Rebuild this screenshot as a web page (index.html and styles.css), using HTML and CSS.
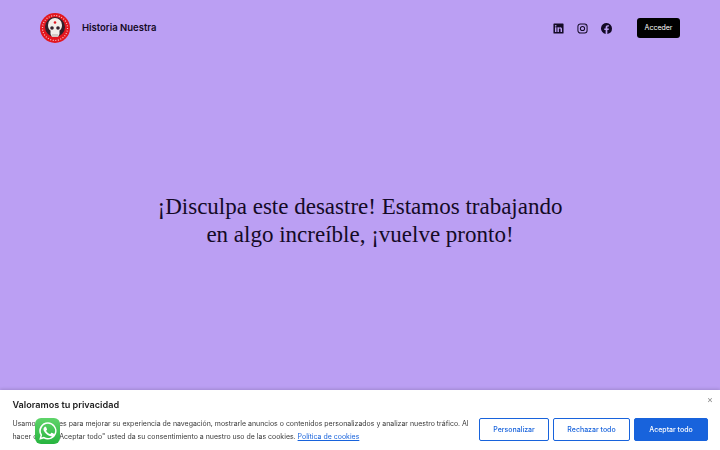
FILE: index.html
```html
<!DOCTYPE html>
<html lang="es">
<head>
	<meta charset="UTF-8">
	<title>Historia Nuestra</title>
	<link rel="stylesheet" href="styles.css">
</head>
<body>
	<div class="page">
		<header class="top">
			<a class="brand" href="#">
				<svg class="logo" width="30" height="30" viewBox="0 0 30 30">
					<circle cx="15" cy="15" r="15" fill="#e3161f"/>
					<circle cx="15" cy="15" r="12.500" fill="none" stroke="#f6c6c6" stroke-width="1.200" stroke-dasharray="1 1.600"/>
					<circle cx="15" cy="14" r="10" fill="#33202a"/>
					<path d="M8 12a7 7 0 0 1 14 0c0 3-1 4.500-2.500 5.500v3.500l-1.500 3h-6l-1.500-3v-3.500c-1.500-1-2.500-2.500-2.500-5.500z" fill="#f3eee8"/>
					<circle cx="12" cy="15" r="1.800" fill="#33202a"/>
					<circle cx="18" cy="15" r="1.800" fill="#33202a"/>
					<circle cx="15" cy="9.500" r="1.300" fill="#e3161f"/>
					<path d="M13 21v3M15 21v3M17 21v3" stroke="#8a7a75" stroke-width=".6"/>
				</svg>
				<span class="brand-name">Historia Nuestra</span>
			</a>
			<nav class="nav">
				<a class="social" href="#">
					<svg width="11" height="11" viewBox="0 0 24 24"><path fill="#140a26" d="M21.700 1H2.300C1.600 1 1 1.600 1 2.300v19.400c0 .7.600 1.300 1.300 1.300h19.400c.7 0 1.300-.6 1.300-1.300V2.300c0-.7-.6-1.300-1.300-1.300zM7.500 19.700H4.300V9.400h3.200v10.300zM5.900 8c-1 0-1.900-.8-1.900-1.900s.9-1.900 1.900-1.900 1.900.9 1.900 1.900S7 8 5.900 8zm13.800 11.700h-3.200v-5c0-1.200 0-2.700-1.700-2.700s-1.900 1.300-1.900 2.600v5.100H9.700V9.400h3.100v1.400c.4-.8 1.500-1.700 3.100-1.700 3.300 0 3.800 2.100 3.800 4.900v5.700z"/></svg>
				</a>
				<a class="social" href="#">
					<svg width="11" height="11" viewBox="0 0 24 24" fill="none" stroke="#140a26" stroke-width="2.200"><rect x="2" y="2" width="20" height="20" rx="5.500"/><circle cx="12" cy="12" r="4.600"/><circle cx="17.800" cy="6.200" r="1" fill="#140a26" stroke="none"/></svg>
				</a>
				<a class="social" href="#">
					<svg width="11" height="11" viewBox="0 0 24 24"><path fill="#140a26" d="M24 12a12 12 0 1 0-13.900 11.900v-8.400H7.100V12h3V9.400c0-3 1.800-4.700 4.500-4.700 1.300 0 2.700.2 2.700.2v3h-1.500c-1.500 0-2 .9-2 1.900V12h3.400l-.5 3.500h-2.800v8.400A12 12 0 0 0 24 12z"/></svg>
				</a>
				<a class="login" href="#">Acceder</a>
			</nav>
		</header>
		<main class="hero">
			<h1 class="headline">¡Disculpa este desastre! Estamos trabajando<br>en algo increíble, ¡vuelve pronto!</h1>
		</main>
	</div>

	<!-- aviso de cookies -->
	<div class="cookie">
		<button class="cookie-close" type="button">×</button>
		<h2 class="cookie-title">Valoramos tu privacidad</h2>
		<div class="cookie-row">
			<p class="cookie-text">Usamos cookies para mejorar su experiencia de navegación, mostrarle anuncios o contenidos personalizados y analizar nuestro tráfico. Al hacer clic en "Aceptar todo" usted da su consentimiento a nuestro uso de las cookies. <a href="#">Política de cookies</a></p>
			<div class="cookie-btns">
				<button class="btn btn-line btn-custom" type="button">Personalizar</button>
				<button class="btn btn-line" type="button">Rechazar todo</button>
				<button class="btn btn-fill" type="button">Aceptar todo</button>
			</div>
		</div>
	</div>

	<a class="whatsapp" href="#">
		<svg width="20" height="20" viewBox="0 0 24 24"><path fill="#fff" d="M12 1.500A10.400 10.400 0 0 0 3 17.200L1.500 22.500l5.500-1.400A10.400 10.400 0 1 0 12 1.500zm0 1.900a8.500 8.500 0 1 1-4.500 15.700l-.4-.2-3 .8.800-3-.2-.4A8.500 8.500 0 0 1 12 3.400zM8.500 7c-.2 0-.5 0-.8.4-.3.300-1.100 1-1.100 2.500s1.100 3 1.300 3.200c.2.200 2.200 3.400 5.400 4.600 2.600 1 3.200.8 3.700.8.600-.1 1.800-.8 2-1.500.3-.7.300-1.300.2-1.500-.1-.1-.3-.2-.6-.4l-2.100-1c-.3-.1-.5-.1-.7.200l-1 1.200c-.2.200-.4.200-.7.100-.3-.2-1.300-.5-2.500-1.500-.9-.8-1.500-1.800-1.700-2.100-.2-.3 0-.5.100-.6l.5-.5.300-.5v-.5l-1-2.300c-.2-.6-.5-.6-.7-.6z"/></svg>
	</a>
</body>
</html>
```

FILE: styles.css
```css
*{margin: 0;padding: 0;box-sizing: border-box;}
html,body{height: 100%;overflow: hidden;}
body{background: #bb9ff3;color: #140a26;font-family: Inter, "Liberation Sans", sans-serif;}
a{color: inherit;text-decoration: none;}

.page{height: 100%;display: flex;flex-direction: column;}
.top{display: flex;justify-content: space-between;align-items: center;padding: 13px 40px 0;}
.brand{display: flex;align-items: center;gap: 12px;}
.logo{display: block;}
.brand-name{font-size: 9.500px;font-weight: 600;padding-bottom: 2px;}
.nav{display: flex;align-items: center;}
.social{display: flex;justify-content: center;margin-right: 12px;width: 12px;}
.login{margin-left: 13px;background: #000;color: #fff;font-size: 7px;line-height: 20px;padding: 0 7.500px;border-radius: 3px;}

/* titular centrado */
.hero{flex: 1;display: flex;align-items: center;justify-content: center;padding-bottom: 52px;}
.headline{font-family: "Liberation Serif", serif;font-weight: 400;font-size: 23px;line-height: 27.500px;text-align: center;}

.cookie{position: fixed;left: 0;right: 0;bottom: 0;height: 60px;background: #fff;padding: 9px 12px 0 12.500px;color: #212121;box-shadow: 0 -1px 3px rgba(0,0,0,.15);}
.cookie-close{position: absolute;top: 4px;right: 7px;border: 0;background: none;color: #8a8a8a;font-size: 9px;font-family: inherit;}
.cookie-title{font-size: 9.100px;font-weight: 600;line-height: 12px;margin-bottom: 7px;}
.cookie-row{display: flex;align-items: flex-start;justify-content: space-between;}
.cookie-text{width: 462px;font-size: 6.970px;line-height: 12.500px;color: #3a3a3a;}
.cookie-text a{color: #1863dc;text-decoration: underline;}
.cookie-btns{display: flex;gap: 4px;}
.btn{width: 77px;height: 23px;font-family: inherit;font-size: 7px;font-weight: 500;border-radius: 2px;}
.btn-custom{width: 70px;}
.btn-line{background: #fff;color: #1863dc;border: 1.500px solid #1863dc;}
.btn-fill{width: 74px;background: #1863dc;color: #fff;border: 1px solid #1863dc;}

.whatsapp{position: fixed;left: 35px;top: 418px;width: 25px;height: 26px;border-radius: 6px;background: linear-gradient(#5fd46a,#27b43f);display: flex;align-items: center;justify-content: center;}
```
